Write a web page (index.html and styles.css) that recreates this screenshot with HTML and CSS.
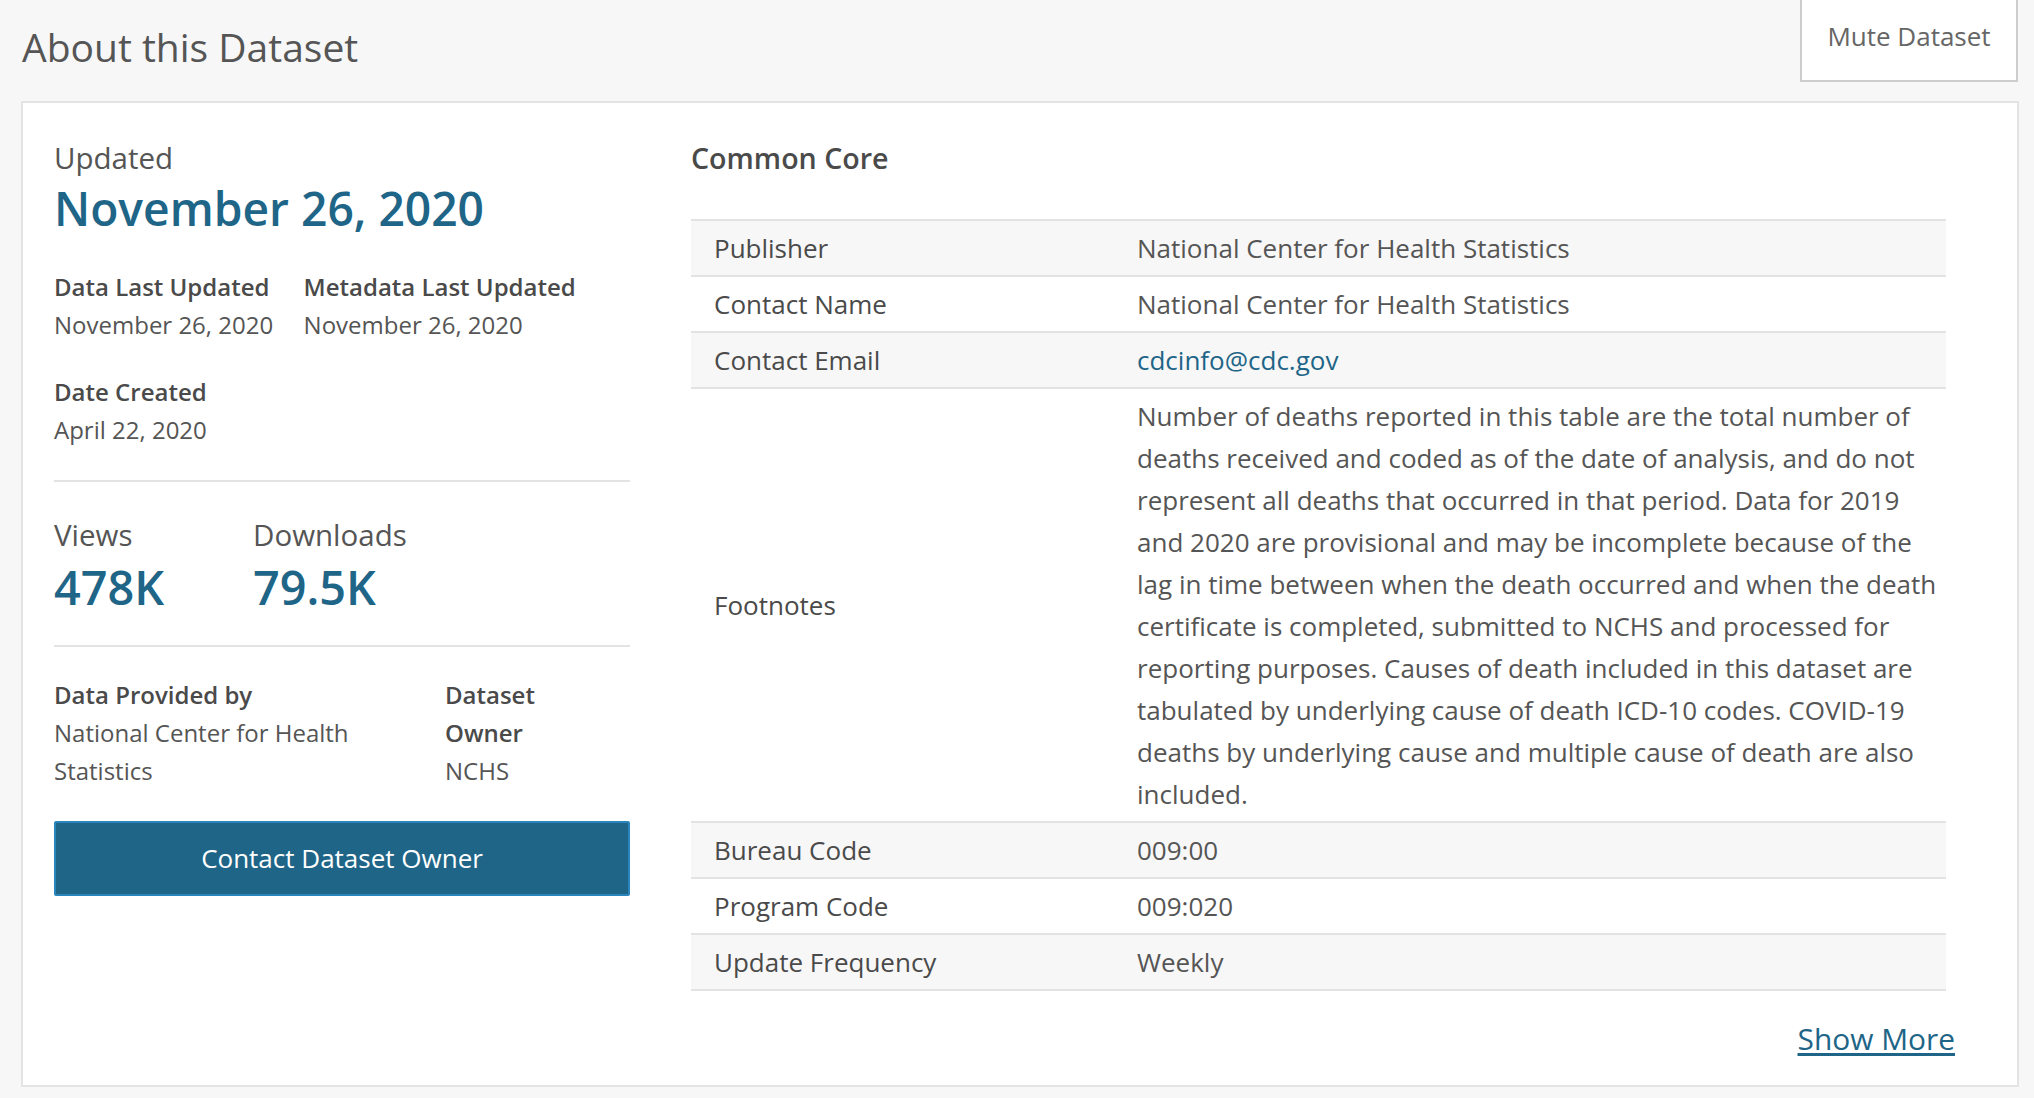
FILE: index.html
```html
<!DOCTYPE html>
<html lang="en">
<head>
<meta charset="utf-8">
<title>About this Dataset</title>
<link rel="stylesheet" href="styles.css">
</head>
<body>
<div class="page">
  <header class="page-header">
    <h1 class="page-title">About this Dataset</h1>
    <button class="mute-btn" type="button">Mute Dataset</button>
  </header>

  <section class="card">
    <aside class="summary">
      <div class="updated-label">Updated</div>
      <div class="updated-date">November 26, 2020</div>

      <div class="date-pair">
        <div class="meta">
          <div class="meta-label">Data Last Updated</div>
          <div class="meta-value">November 26, 2020</div>
        </div>
        <div class="meta">
          <div class="meta-label">Metadata Last Updated</div>
          <div class="meta-value">November 26, 2020</div>
        </div>
      </div>

      <div class="meta created">
        <div class="meta-label">Date Created</div>
        <div class="meta-value">April 22, 2020</div>
      </div>

      <hr class="divider first">

      <div class="stats">
        <div class="stat">
          <div class="stat-label">Views</div>
          <div class="stat-value">478K</div>
        </div>
        <div class="stat">
          <div class="stat-label">Downloads</div>
          <div class="stat-value">79.5K</div>
        </div>
      </div>

      <hr class="divider second">

      <div class="provider">
        <div class="meta">
          <div class="meta-label">Data Provided by</div>
          <div class="meta-value">National Center for Health Statistics</div>
        </div>
        <div class="meta">
          <div class="meta-label">Dataset Owner</div>
          <div class="meta-value">NCHS</div>
        </div>
      </div>

      <button class="contact-btn" type="button">Contact Dataset Owner</button>
    </aside>

    <div class="core">
      <h2 class="core-title">Common Core</h2>
      <div class="core-table">
        <div class="row"><div class="key">Publisher</div><div class="val">National Center for Health Statistics</div></div>
        <div class="row"><div class="key">Contact Name</div><div class="val">National Center for Health Statistics</div></div>
        <div class="row"><div class="key">Contact Email</div><div class="val"><a class="email" href="#">cdcinfo@cdc.gov</a></div></div>
        <div class="row"><div class="key">Footnotes</div><div class="val footnote">Number of deaths reported in this table are the total number of<br>deaths received and coded as of the date of analysis, and do not<br>represent all deaths that occurred in that period. Data for 2019<br>and 2020 are provisional and may be incomplete because of the<br>lag in time between when the death occurred and when the death<br>certificate is completed, submitted to NCHS and processed for<br>reporting purposes. Causes of death included in this dataset are<br>tabulated by underlying cause of death ICD-10 codes. COVID-19<br>deaths by underlying cause and multiple cause of death are also<br>included.</div></div>
        <div class="row"><div class="key">Bureau Code</div><div class="val">009:00</div></div>
        <div class="row"><div class="key">Program Code</div><div class="val">009:020</div></div>
        <div class="row"><div class="key">Update Frequency</div><div class="val">Weekly</div></div>
      </div>
      <div class="show-more-wrap"><a class="show-more" href="#">Show More</a></div>
    </div>
  </section>
</div>
</body>
</html>
```

FILE: styles.css
```css
html, body {
  margin: 0;
  padding: 0;
}

body {
  background: #f7f7f7;
  font-family: "Open Sans", "Noto Sans", sans-serif;
  color: #555555;
}

.page {
  padding: 0 15px 11px 21px;
}

/* ---------- header ---------- */
.page-header {
  display: flex;
  justify-content: space-between;
  align-items: flex-start;
  height: 101px;
}

.page-title {
  margin: 0;
  padding-top: 21.5px;
  padding-left: 1px;
  font-size: 39px;
  font-weight: 400;
  line-height: 50.7px;
  color: #555555;
}

.mute-btn {
  box-sizing: border-box;
  width: 218px;
  height: 82px;
  margin-right: 1px;
  padding: 0 0 8px;
  background: #ffffff;
  border: 2px solid #cdcdcd;
  border-top: 0;
  font-family: inherit;
  font-size: 26px;
  font-weight: 400;
  line-height: 37px;
  color: #666666;
  text-align: center;
}

/* ---------- card ---------- */
.card {
  display: flex;
  background: #ffffff;
  border: 2px solid #e4e4e4;
  padding: 35.55px 62px 25.6px 31px;
}

.summary {
  flex: none;
  width: 576px;
}

.updated-label {
  font-size: 29.5px;
  font-weight: 400;
  line-height: 37px;
  color: #555555;
}

.updated-date {
  margin-top: 5.3px;
  font-size: 46.2px;
  font-weight: 600;
  line-height: 56px;
  color: #1e6587;
}

.date-pair {
  display: flex;
  gap: 30.4px;
  margin-top: 31.5px;
}

.meta-label {
  font-size: 24px;
  font-weight: 600;
  line-height: 38px;
  color: #4a4a4a;
}

.meta-value {
  font-size: 24px;
  font-weight: 400;
  line-height: 38px;
  color: #555555;
}

.created {
  margin-top: 28.9px;
}

.divider {
  height: 2px;
  margin: 0;
  border: 0;
  background: #e3e3e3;
}

.divider.first {
  margin-top: 30.4px;
}

.divider.second {
  margin-top: 29.5px;
}

.stats {
  display: grid;
  grid-template-columns: 199px auto;
  margin-top: 34px;
}

.stat-label {
  font-size: 29.5px;
  font-weight: 400;
  line-height: 37px;
  color: #555555;
}

.stat-value {
  margin-top: 6.5px;
  font-size: 46.8px;
  font-weight: 600;
  line-height: 56px;
  color: #1e6587;
}

.provider {
  display: grid;
  grid-template-columns: 371px 145px;
  column-gap: 20px;
  margin-top: 28.9px;
}

.contact-btn {
  display: block;
  box-sizing: border-box;
  width: 100%;
  height: 75px;
  margin-top: 31.1px;
  padding: 0;
  background: #1f6587;
  border: 2px solid #2a85bd;
  border-radius: 2px;
  font-family: inherit;
  font-size: 26px;
  font-weight: 400;
  line-height: 37px;
  color: #ffffff;
  text-align: center;
}

/* ---------- common core ---------- */
.core {
  flex: 1;
  min-width: 0;
  margin-left: 61px;
}

.core-title {
  margin: 0;
  font-size: 28.6px;
  font-weight: 600;
  line-height: 37px;
  color: #4a4a4a;
}

.core-table {
  margin-top: 43.45px;
  margin-right: 9px;
  border-bottom: 2px solid #e3e3e3;
}

.row {
  display: grid;
  grid-template-columns: 424px 1fr;
  border-top: 2px solid #e3e3e3;
}

.row:nth-child(odd) {
  background: #f7f7f7;
}

.key,
.val {
  padding: 6px 23px;
  font-size: 26px;
  line-height: 42px;
}

.key {
  display: flex;
  align-items: center;
  color: #4a4a4a;
}

.val {
  padding-left: 22px;
  padding-right: 4px;
  color: #555555;
}

.footnote {
  white-space: nowrap;
}

.email {
  color: #1e6587;
  text-decoration: none;
}

.show-more-wrap {
  margin-top: 28.4px;
  text-align: right;
  font-size: 29.9px;
  line-height: 40px;
}

.show-more {
  color: #1e6587;
  text-decoration: underline;
  text-decoration-thickness: 2.5px;
  text-underline-offset: 3px;
}
```
